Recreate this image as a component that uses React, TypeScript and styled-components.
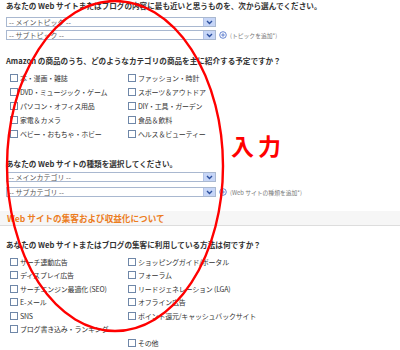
import React from 'react';
import styled, {createGlobalStyle} from 'styled-components';

const GlobalStyle = createGlobalStyle`
    body {
        margin: 0;
        background: #ffffff;
        font-family: "Noto Sans CJK JP", "Liberation Sans", sans-serif;
        color: #333333;
    }
`

const amazonLeft = ['本・漫画・雑誌', 'DVD・ミュージック・ゲーム', 'パソコン・オフィス用品', '家電＆カメラ', 'ベビー・おもちゃ・ホビー']
const amazonRight = ['ファッション・時計', 'スポーツ＆アウトドア', 'DIY・工具・ガーデン', '食品＆飲料', 'ヘルス＆ビューティー']

const trafficLeft = ['サーチ連動広告', 'ディスプレイ広告', 'サーチエンジン最適化 (SEO)', 'E-メール', 'SNS', 'ブログ書き込み・ランキング', '']
const trafficRight = ['ショッピングガイド/ポータル', 'フォーラム', 'リードジェネレーション (LGA)', 'オフライン広告', 'ポイント還元/キャッシュバックサイト', '', 'その他']

const Arrow = () => (
    <svg width="7" height="5" viewBox="0 0 7 5">
        <path d="M1 1 L3.5 3.5 L6 1" stroke="#2b4f9e" strokeWidth="1.4" fill="none"/>
    </svg>
)

const PlusIcon = () => (
    <svg width="8" height="8" viewBox="0 0 8 8">
        <circle cx="4" cy="4" r="3.3" stroke="#5577cc" strokeWidth="0.9" fill="#ffffff"/>
        <path d="M4 2.2 V5.8 M2.2 4 H5.8" stroke="#5577cc" strokeWidth="0.9"/>
    </svg>
)

type SelectProps = {
    label: string
}

const FakeSelect = ({label}: SelectProps) => (
    <SelectBox>
        <SelectText>{label}</SelectText>
        <ArrowButton><Arrow/></ArrowButton>
    </SelectBox>
)

type CheckGridProps = {
    left: string[]
    right: string[]
    pitch: number
}

const CheckGrid = ({left, right, pitch}: CheckGridProps) => (
    <Grid>
        {left.map((item, i) => (
            <React.Fragment key={i}>
                <CheckRow pitch={pitch}>
                    {item && <><Box/><Label>{item}</Label></>}
                </CheckRow>
                <CheckRow pitch={pitch}>
                    {right[i] && <><Box/><Label>{right[i]}</Label></>}
                </CheckRow>
            </React.Fragment>
        ))}
    </Grid>
)

export default function App() {
    return (
        <Page>
            <GlobalStyle/>
            <Question>あなたの Web サイトまたはブログの内容に最も近いと思うものを、次から選んでください。</Question>
            <SelectRow top={6}>
                <FakeSelect label="-- メイントピック --"/>
            </SelectRow>
            <SelectRow top={3}>
                <FakeSelect label="-- サブトピック --"/>
                <PlusIcon/>
                <Hint>(トピックを追加*)</Hint>
            </SelectRow>

            <Question top={15}>Amazon の商品のうち、どのようなカテゴリの商品を主に紹介する予定ですか？</Question>
            <GridWrap top={5}>
                <CheckGrid left={amazonLeft} right={amazonRight} pitch={14}/>
            </GridWrap>

            <Question top={17}>あなたの Web サイトの種類を選択してください。</Question>
            <SelectRow top={3}>
                <FakeSelect label="-- メインカテゴリ --"/>
            </SelectRow>
            <SelectRow top={5}>
                <FakeSelect label="-- サブカテゴリ --"/>
                <PlusIcon/>
                <Hint>(Web サイトの種類を追加*)</Hint>
            </SelectRow>

            <SectionBand>Web サイトの集客および収益化について</SectionBand>

            <Question top={13}>あなたの Web サイトまたはブログの集客に利用している方法は何ですか？</Question>
            <GridWrap top={5}>
                <CheckGrid left={trafficLeft} right={trafficRight} pitch={13.5}/>
            </GridWrap>

            <Overlay width="400" height="350" viewBox="0 0 400 350">
                <ellipse cx="115" cy="166" rx="108" ry="165" stroke="#ff0000" strokeWidth="2.4" fill="none"/>
            </Overlay>
            <Stamp>入力</Stamp>
        </Page>
    )
}

const Page = styled.div`
    position: relative;
    width: 400px;
    height: 350px;
    overflow: hidden;
    padding: 0 6px;
    box-sizing: border-box;
`

const Question = styled.div<{top?: number}>`
    margin-top: ${(props) => props.top || 0}px;
    font-size: 7.6px;
    line-height: 11px;
    font-weight: bold;
    color: #333333;
    white-space: nowrap;
`

const SelectRow = styled.div<{top: number}>`
    display: flex;
    align-items: center;
    gap: 3px;
    margin-top: ${(props) => props.top}px;
    height: 10px;
`

const SelectBox = styled.div`
    display: flex;
    align-items: center;
    width: 210px;
    height: 10px;
    box-sizing: border-box;
    border: 1px solid #a9b8d0;
    background: #ffffff;
`

const SelectText = styled.span`
    flex: 1;
    padding-left: 2px;
    font-size: 7px;
    line-height: 8px;
    color: #555555;
    white-space: nowrap;
`

const ArrowButton = styled.span`
    display: flex;
    align-items: center;
    justify-content: center;
    width: 11px;
    height: 8px;
    background: #c7d6f7;
    border-left: 1px solid #b3c3e6;
`

const Hint = styled.span`
    font-size: 5.8px;
    color: #777777;
    white-space: nowrap;
`

const GridWrap = styled.div<{top: number}>`
    margin-top: ${(props) => props.top}px;
    padding-left: 4px;
`

const Grid = styled.div`
    display: grid;
    grid-template-columns: 118px 1fr;
`

const CheckRow = styled.div<{pitch: number}>`
    display: flex;
    align-items: center;
    height: ${(props) => props.pitch}px;
    white-space: nowrap;
`

const Box = styled.span`
    width: 6px;
    height: 6px;
    border: 1px solid #6f87a8;
    background: #ffffff;
    margin-right: 2px;
    flex-shrink: 0;
`

const Label = styled.span`
    font-size: 7px;
    color: #333333;
    letter-spacing: -0.2px;
`

const SectionBand = styled.div`
    margin: 14px -6px 0;
    height: 15px;
    box-sizing: border-box;
    padding-left: 7px;
    display: flex;
    align-items: center;
    background: #f6f6f6;
    border-bottom: 1px solid #dddddd;
    color: #ec7d1e;
    font-size: 8.6px;
    font-weight: bold;
`

const Overlay = styled.svg`
    position: absolute;
    left: 0;
    top: 0;
    pointer-events: none;
`

const Stamp = styled.div`
    position: absolute;
    left: 231px;
    top: 130px;
    color: #ff0000;
    font-size: 23px;
    font-weight: bold;
    letter-spacing: 4px;
    line-height: 30px;
`
